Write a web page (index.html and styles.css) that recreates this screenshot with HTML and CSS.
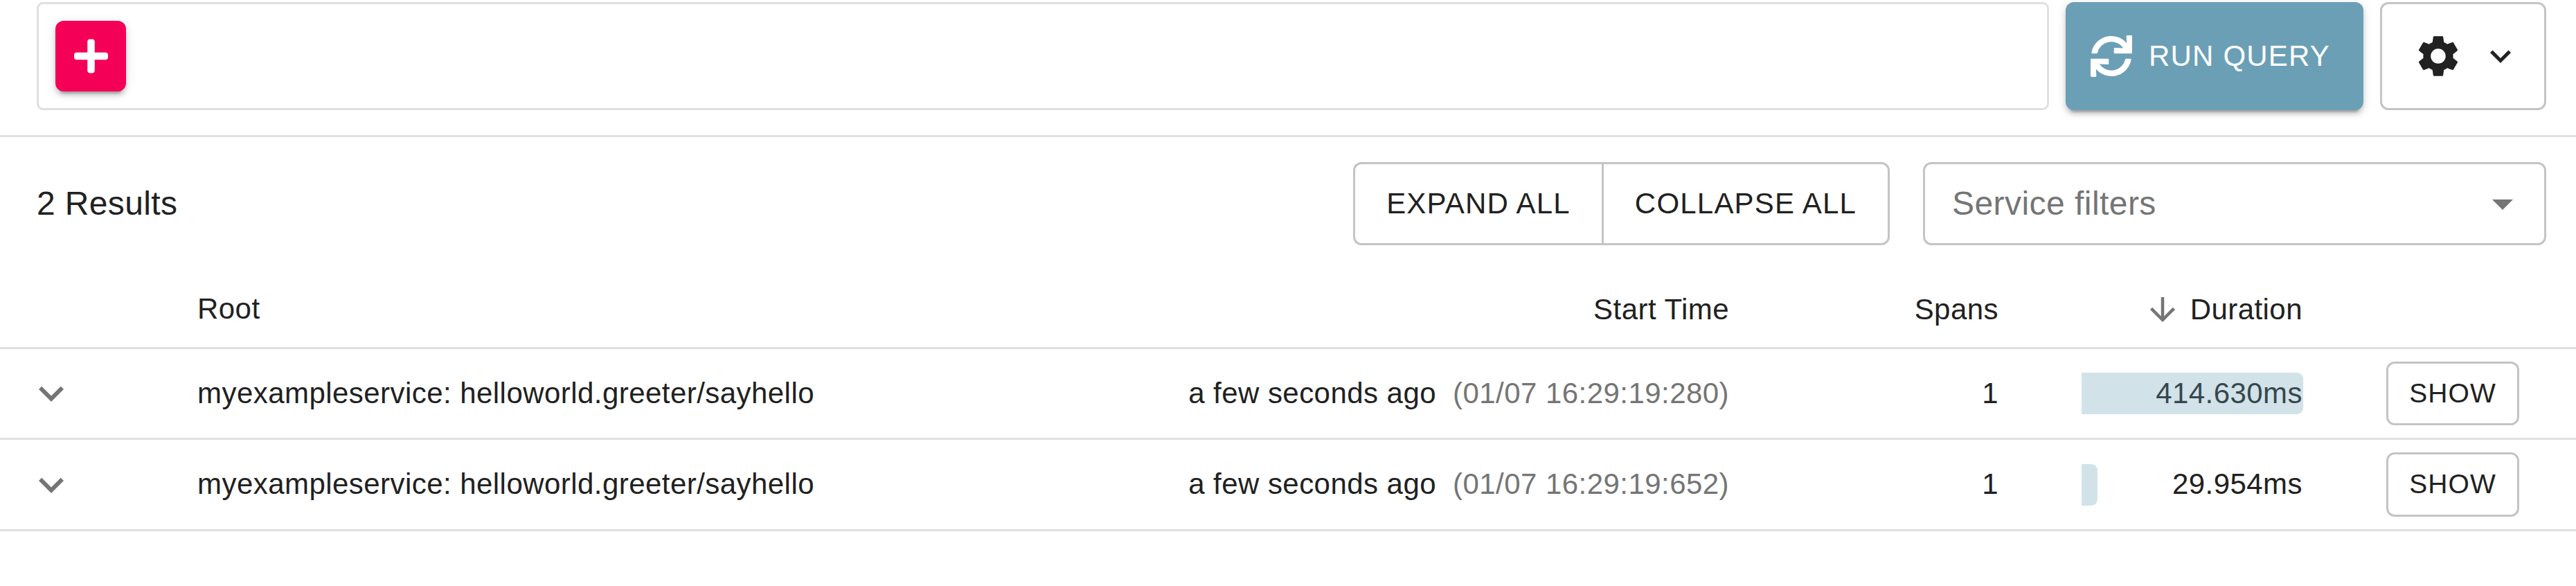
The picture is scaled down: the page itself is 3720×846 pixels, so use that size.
FILE: index.html
```html
<!DOCTYPE html>
<html lang="en">
<head>
<meta charset="utf-8">
<title>Traces</title>
<link rel="stylesheet" href="styles.css">
</head>
<body>
<svg class="defs" aria-hidden="true">
  <symbol id="chevron" viewBox="0 0 24 24"><path d="M16.59 8.59L12 13.17 7.41 8.59 6 10l6 6 6-6z"/></symbol>
</svg>
<header class="search">
  <div class="criteria">
    <button class="add" aria-label="Add criterion">
      <svg class="plus" viewBox="0 0 448 512"><path d="M416 208H272V64c0-17.67-14.33-32-32-32h-32c-17.67 0-32 14.33-32 32v144H32c-17.67 0-32 14.33-32 32v32c0 17.67 14.33 32 32 32h144v144c0 17.67 14.33 32 32 32h32c17.67 0 32-14.33 32-32V304h144c17.67 0 32-14.33 32-32v-32c0-17.67-14.33-32-32-32z"/></svg>
    </button>
  </div>
  <button class="run">
    <svg class="icon-60" viewBox="0 0 512 512"><path d="M440.65 12.57l4 82.77A247.16 247.16 0 0 0 255.83 8C134.73 8 33.91 94.92 12.29 209.82A12 12 0 0 0 24.09 224h49.05a12 12 0 0 0 11.67-9.26 175.91 175.91 0 0 1 317-56.94l-101.46-4.86a12 12 0 0 0-12.57 12v47.41a12 12 0 0 0 12 12H500a12 12 0 0 0 12-12V12a12 12 0 0 0-12-12h-47.37a12 12 0 0 0-11.98 12.57zM255.83 432a175.61 175.61 0 0 1-146-77.8l101.8 4.87a12 12 0 0 0 12.57-12v-47.4a12 12 0 0 0-12-12H12a12 12 0 0 0-12 12V500a12 12 0 0 0 12 12h47.35a12 12 0 0 0 12-12.6l-4.15-82.57A247.17 247.17 0 0 0 255.83 504c121.11 0 221.93-86.92 243.55-201.82a12 12 0 0 0-11.8-14.18h-49.05a12 12 0 0 0-11.67 9.26A175.86 175.86 0 0 1 255.83 432z"/></svg>
    <span class="label">RUN QUERY</span>
  </button>
  <button class="settings" aria-label="Settings">
    <svg class="icon-72" viewBox="0 0 24 24"><path d="M19.14 12.94c.04-.3.06-.61.06-.94 0-.32-.02-.64-.07-.94l2.03-1.58c.18-.14.23-.41.12-.61l-1.92-3.32c-.12-.22-.37-.29-.59-.22l-2.39.96c-.5-.38-1.03-.7-1.62-.94l-.36-2.54c-.04-.24-.24-.41-.48-.41h-3.84c-.24 0-.43.17-.47.41l-.36 2.54c-.59.24-1.13.57-1.62.94l-2.39-.96c-.22-.08-.47 0-.59.22L2.74 8.87c-.12.21-.08.47.12.61l2.03 1.58c-.05.3-.09.63-.09.94s.02.64.07.94l-2.03 1.58c-.18.14-.23.41-.12.61l1.92 3.32c.12.22.37.29.59.22l2.39-.96c.5.38 1.03.7 1.62.94l.36 2.54c.05.24.24.41.48.41h3.84c.24 0 .44-.17.47-.41l.36-2.54c.59-.24 1.13-.56 1.62-.94l2.39.96c.22.08.47 0 .59-.22l1.92-3.32c.12-.22.07-.47-.12-.61l-2.01-1.58zM12 15.6c-1.98 0-3.6-1.62-3.6-3.6s1.62-3.6 3.6-3.6 3.6 1.62 3.6 3.6-1.62 3.6-3.6 3.6z"/></svg>
    <svg class="icon-60"><use href="#chevron"/></svg>
  </button>
</header>
<main>
  <div class="toolbar">
    <h6 class="count">2 Results</h6>
    <div class="group">
      <button class="expand">EXPAND ALL</button>
      <button class="collapse">COLLAPSE ALL</button>
    </div>
    <div class="filter">
      <span class="label">Service filters</span>
      <svg class="icon-72" viewBox="0 0 24 24"><path d="M7 10l5 5 5-5z"/></svg>
    </div>
  </div>
  <div class="row head">
    <span></span>
    <span class="cell root">Root</span>
    <span class="cell num">Start Time</span>
    <span class="cell num">Spans</span>
    <span class="cell num sorted">
      <svg class="icon-54" viewBox="0 0 24 24"><path d="M20 12l-1.41-1.41L13 16.17V4h-2v12.17l-5.58-5.59L4 12l8 8 8-8z"/></svg>Duration
    </span>
  </div>
  <div class="row first">
    <svg class="icon-72 toggle"><use href="#chevron"/></svg>
    <span class="cell">myexampleservice: helloworld.greeter/sayhello</span>
    <span class="cell num">a few seconds ago<span class="stamp">(01/07 16:29:19:280)</span></span>
    <span class="cell num">1</span>
    <span class="cell num duration">414.630ms<span class="bar" style="width: 100%"></span></span>
    <button class="show">SHOW</button>
  </div>
  <div class="row second">
    <svg class="icon-72 toggle"><use href="#chevron"/></svg>
    <span class="cell">myexampleservice: helloworld.greeter/sayhello</span>
    <span class="cell num">a few seconds ago<span class="stamp">(01/07 16:29:19:652)</span></span>
    <span class="cell num">1</span>
    <span class="cell num duration">29.954ms<span class="bar" style="width: 7.2%"></span></span>
    <button class="show">SHOW</button>
  </div>
</main>
</body>
</html>
```
FILE: styles.css
```css
* {
  box-sizing: border-box;
}

body {
  margin: 0;
  background: #fff;
  color: #212121;
  font-family: "Liberation Sans", Arial, sans-serif;
  font-size: 42px;
  line-height: 60px;
  letter-spacing: 0.45px;
}

svg {
  display: block;
  flex: none;
  fill: currentColor;
}

.defs {
  display: none;
}

.icon-54 {
  width: 54px;
  height: 54px;
}

.icon-60 {
  width: 60px;
  height: 60px;
}

.icon-72 {
  width: 72px;
  height: 72px;
}

button {
  display: flex;
  align-items: center;
  justify-content: center;
  margin: 0;
  padding: 0;
  border: 3px solid #c4c4c4;
  border-radius: 12px;
  background: #fff;
  color: inherit;
  font: inherit;
  letter-spacing: 1.2px;
  white-space: nowrap;
}

.label,
.cell {
  padding-bottom: 1px;
}

.search {
  display: flex;
  height: 198px;
  padding: 3px 43px 36px 53px;
  border-bottom: 3px solid #e0e0e0;
}

.criteria {
  display: flex;
  flex: 1;
  align-items: center;
  margin-right: 24px;
  padding-left: 24px;
  border: 3px solid #e0e0e0;
  border-radius: 9px;
}

.add,
.run {
  border: 0;
  color: #fff;
  box-shadow: 0 9px 3px -6px rgba(0, 0, 0, 0.2), 0 6px 6px 0 rgba(0, 0, 0, 0.14), 0 3px 15px 0 rgba(0, 0, 0, 0.12);
}

.add {
  width: 102px;
  height: 102px;
  background: #f50057;
}

.plus {
  width: 49px;
  height: 56px;
}

.run {
  width: 430px;
  justify-content: flex-start;
  gap: 24px;
  padding-left: 36px;
  background: #6b9fb6;
}

.settings {
  width: 240px;
  margin-left: 24px;
  gap: 24px;
  padding-left: 12px;
}

.toolbar {
  display: flex;
  align-items: center;
  height: 192px;
  padding: 0 43px 0 53px;
}

.count {
  flex: 1;
  margin: 0;
  padding-bottom: 1px;
  font-size: 48px;
  font-weight: 400;
  letter-spacing: 0.36px;
}

.group {
  display: flex;
  height: 120px;
  margin-right: 48px;
}

.expand,
.collapse {
  padding-bottom: 1px;
}

.expand {
  width: 359px;
  border-right: 0;
  border-radius: 12px 0 0 12px;
}

.collapse {
  width: 416px;
  border-radius: 0 12px 12px 0;
}

.filter {
  display: flex;
  align-items: center;
  justify-content: space-between;
  width: 900px;
  height: 120px;
  padding: 0 24px 0 39px;
  border: 3px solid #c4c4c4;
  border-radius: 12px;
  color: #757575;
  font-size: 48px;
}

.row {
  display: grid;
  grid-template-columns: 247px 1fr 820px 389px 440px 394px;
  align-items: center;
  padding-left: 38px;
  border-bottom: 3px solid #e0e0e0;
}

.head {
  height: 114px;
  padding-top: 3px;
}

.root {
  margin-top: -2px;
}

.first {
  height: 131px;
}

.second {
  height: 132px;
}

.second .cell {
  padding-bottom: 2px;
}

.toggle {
  color: #757575;
}

.num {
  text-align: right;
  white-space: nowrap;
}

.stamp {
  margin-left: 24px;
  color: #757575;
}

.sorted {
  display: flex;
  align-items: center;
  justify-content: flex-end;
  gap: 13px;
  padding-right: 1px;
}

.sorted svg {
  color: #757575;
}

.duration {
  position: relative;
  margin-left: 120px;
  padding-right: 1px;
}

.bar {
  position: absolute;
  top: calc(50% - 30px);
  left: 0;
  height: 60px;
  border-radius: 0 9px 9px 0;
  background: #6b9fb6;
  opacity: 0.3;
}

.show {
  width: 192px;
  height: 92px;
  margin-left: 120px;
  padding-bottom: 1px;
  font-size: 39px;
  letter-spacing: 1.1px;
}

.second .show {
  height: 93px;
  padding-bottom: 2px;
}
```
